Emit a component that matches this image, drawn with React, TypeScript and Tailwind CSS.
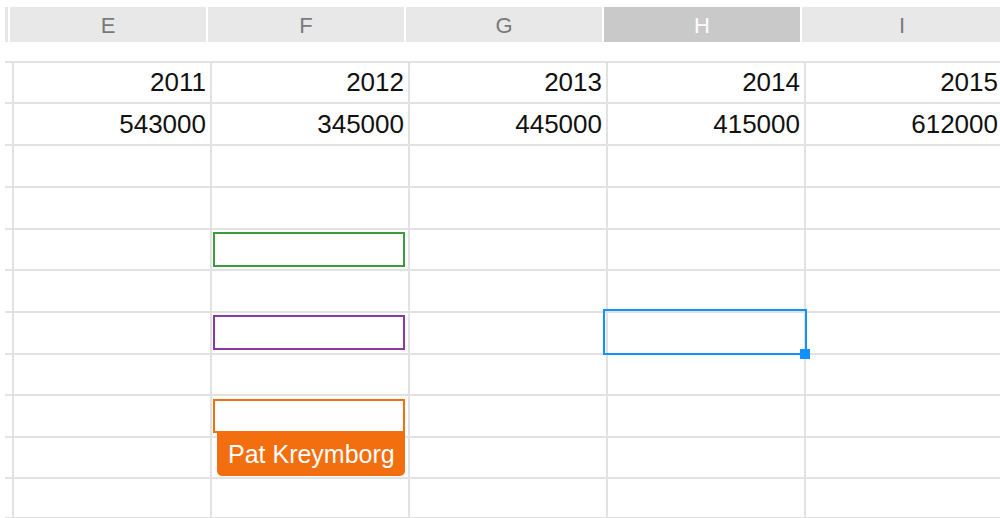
import React from "react";

const heights = [41, 42, 42, 42, 41, 42, 42, 41, 42, 41, 40];
const years = ["2011", "2012", "2013", "2014", "2015"];
const values = ["543000", "345000", "445000", "415000", "612000"];

function Overlay({ row, col }: { row: number; col: number }) {
  if (col === 1 && row === 4) {
    return <div className="absolute left-[1px] top-[2px] w-[192px] h-[35px] border-2 border-[#3b9a3e]" />;
  }
  if (col === 1 && row === 6) {
    return <div className="absolute left-[1px] top-[2px] w-[192px] h-[35px] border-2 border-[#8b38a1]" />;
  }
  if (col === 1 && row === 8) {
    return (
      <div className="absolute left-[1px] top-[3px] z-10 flex flex-col">
        <div className="w-[192px] h-[34px] border-2 border-[#f26e0f] bg-white" />
        <div className="ml-[4px] w-[188px] h-[43px] rounded-b-[5px] bg-[#f26e0f] flex items-center pl-[11px] text-white text-[25px] leading-none">
          Pat Kreymborg
        </div>
      </div>
    );
  }
  if (col === 3 && row === 6) {
    return (
      <>
        <div className="absolute -left-[5px] -top-[4px] w-[204px] h-[46px] border-2 border-[#1190ff] z-10" />
        <div className="absolute left-[192px] top-[36px] w-[10px] h-[10px] bg-[#1190ff] z-20" />
      </>
    );
  }
  return null;
}

export default function App() {
  const headers = ["E", "F", "G", "H", "I"];
  return (
    <div className="w-[1000px] h-[518px] bg-white overflow-hidden font-[family-name:'Liberation_Sans',Arial,sans-serif]">
      <div className="flex gap-[2px] pl-[5px] pt-[7px] h-[42px]">
        <div className="w-[3px] shrink-0 bg-[#e6e6e6]" />
        {headers.map((h, i) => (
          <div
            key={h}
            className={
              i === 3
                ? "w-[196px] shrink-0 bg-[#c9c9c9] text-white flex items-center justify-center text-[22px] pt-[2px]"
                : i === 4
                ? "flex-1 bg-[#e8e8e8] text-[#7a7a7a] flex items-center justify-center text-[22px] pl-[2px] pt-[2px]"
                : "w-[196px] shrink-0 bg-[#e8e8e8] text-[#7a7a7a] flex items-center justify-center text-[22px] pt-[2px]"
            }
          >
            {h}
          </div>
        ))}
      </div>
      <div className="mt-[19px] ml-[5px] border-b-2 border-[#e2e2e2] w-[995px] overflow-hidden">
        {heights.map((ht, r) => (
          <div key={r} className="flex border-t-2 border-[#e2e2e2]" style={{ height: ht }}>
            <div className="w-[7px] shrink-0" />
            {[0, 1, 2, 3, 4].map((c) => (
              <div
                key={c}
                className="relative w-[198px] shrink-0 border-l-2 border-[#e2e2e2] flex items-center justify-end pr-[4px] text-[26px] text-[#111111]"
              >
                {r === 0 ? years[c] : r === 1 ? values[c] : null}
                <Overlay row={r} col={c} />
              </div>
            ))}
          </div>
        ))}
      </div>
    </div>
  );
}
